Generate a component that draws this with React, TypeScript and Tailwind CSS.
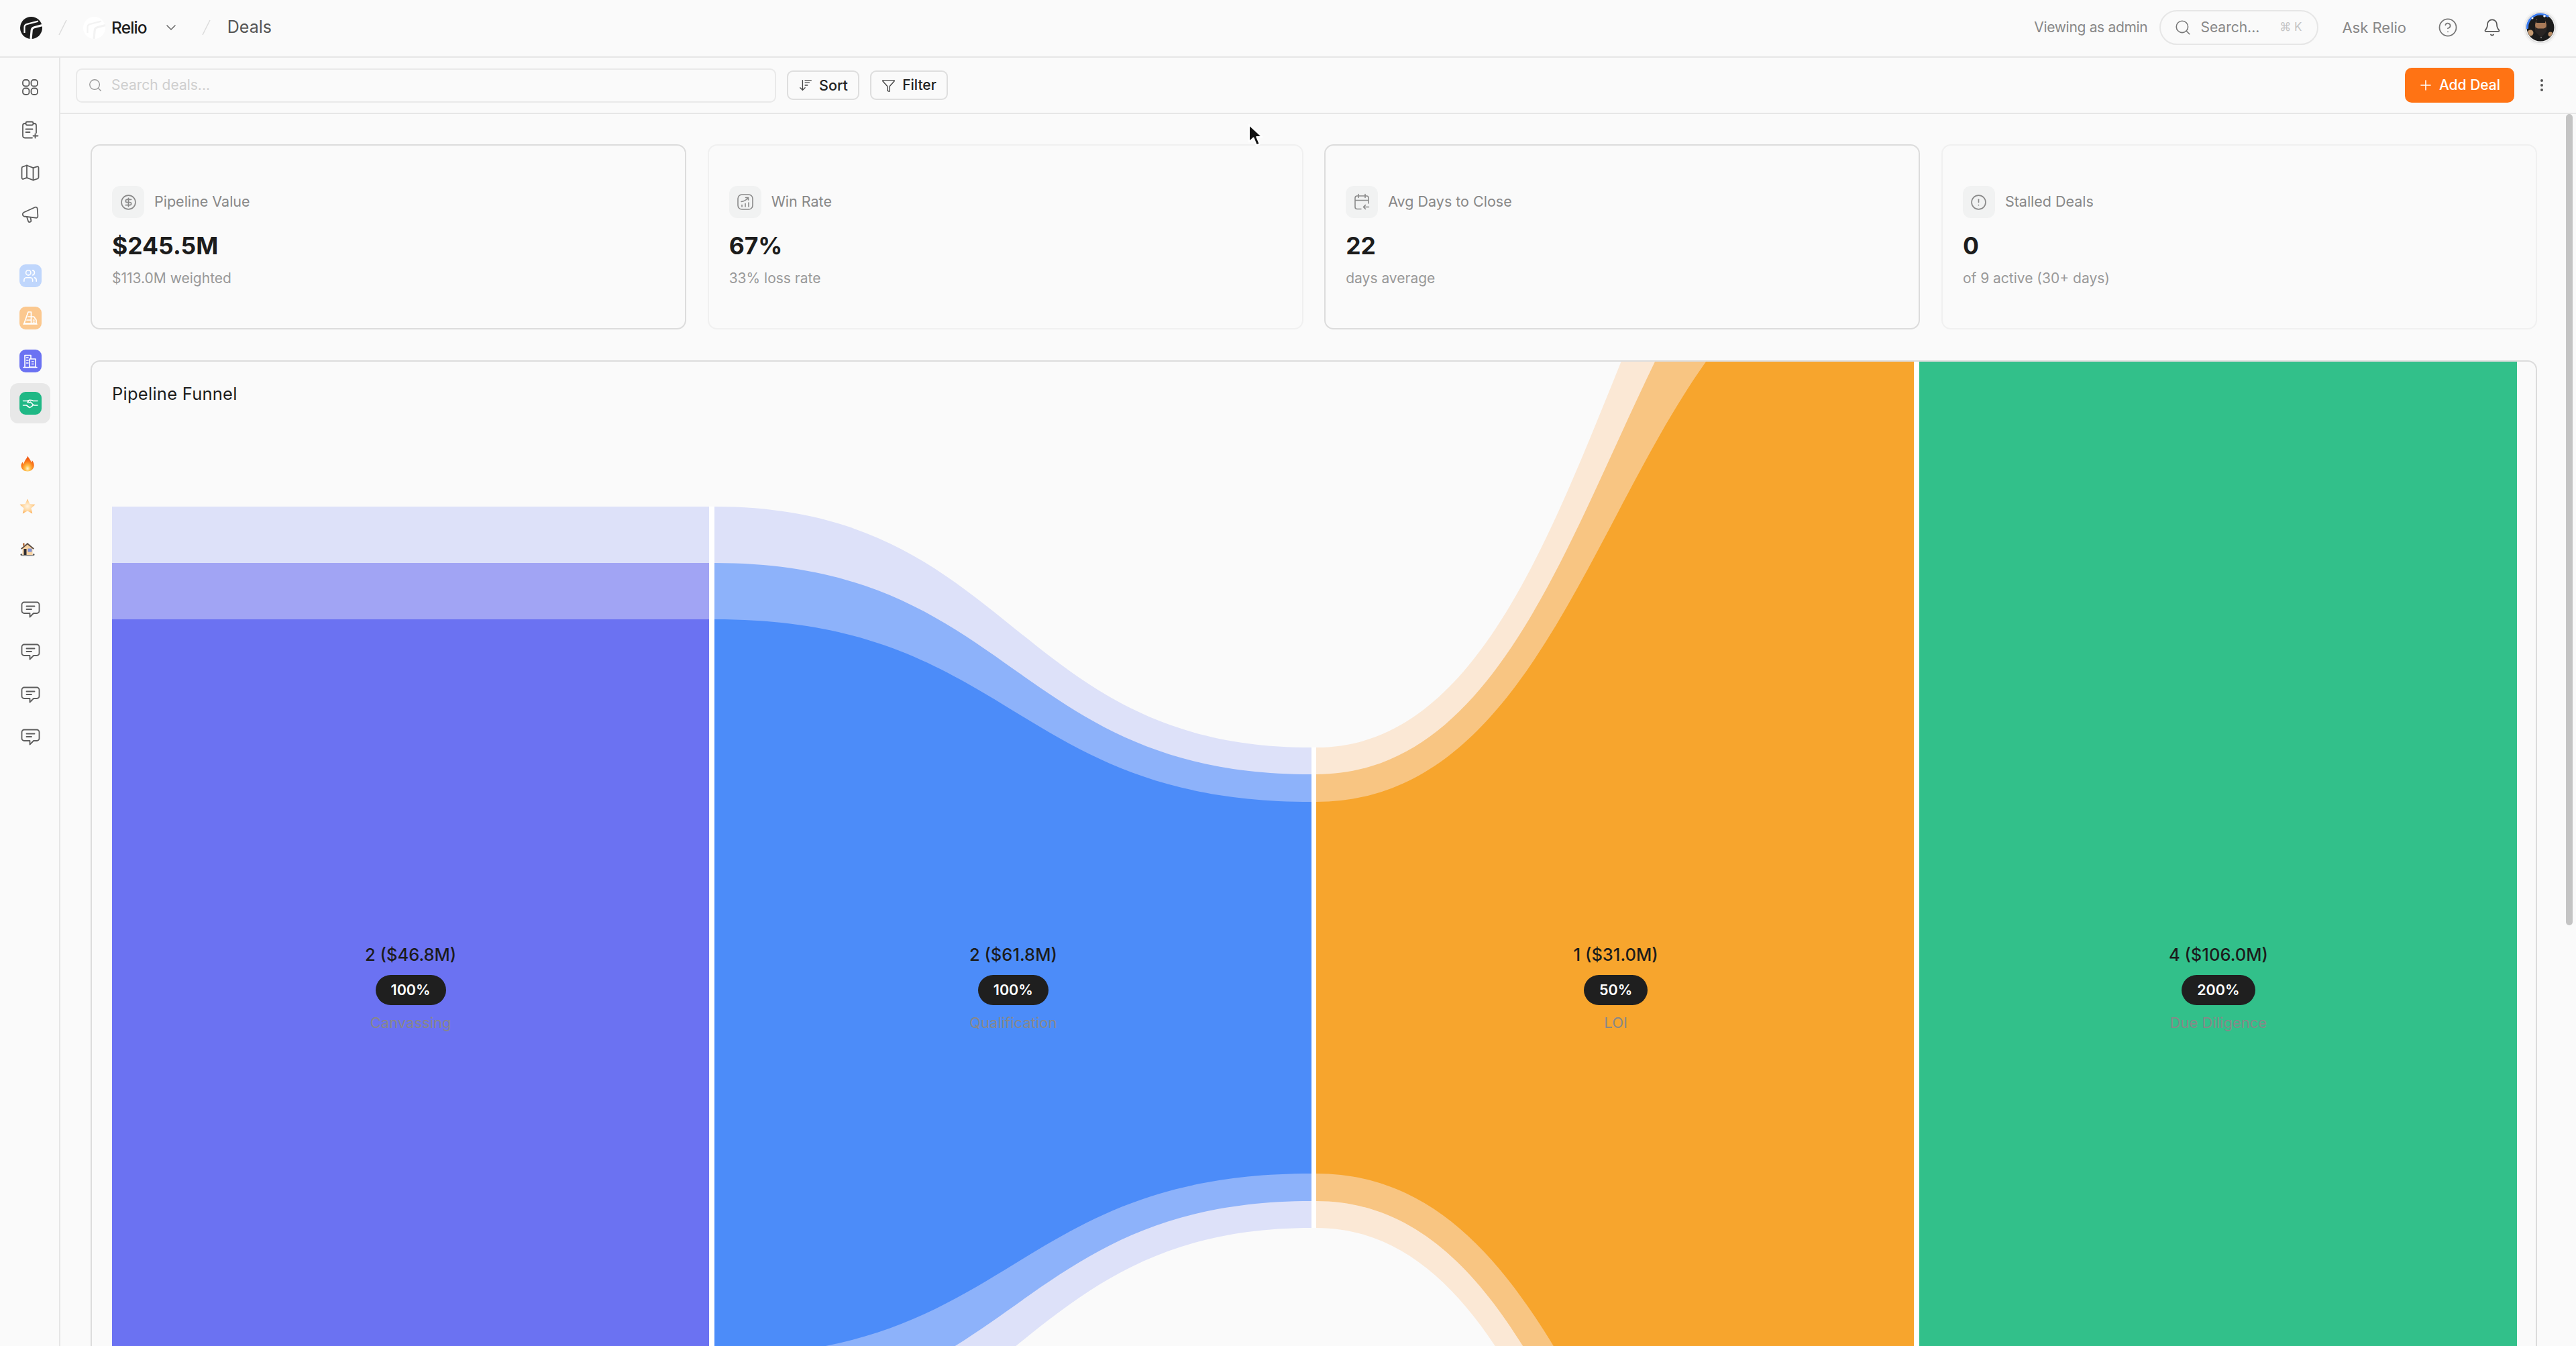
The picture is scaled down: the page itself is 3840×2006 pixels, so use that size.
import React from "react";
import { Users, CircleDollarSign, CircleAlert, Search, ChevronDown, Plus, CircleHelp, Bell, ArrowDownWideNarrow, Funnel, EllipsisVertical } from "lucide-react";

const C = 1472;
function band(x0: number, x1: number, h0: number, h1: number) {
  const m = (x0 + x1) / 2;
  return `M${x0} ${C - h0}C${m} ${C - h0} ${m} ${C - h1} ${x1} ${C - h1}L${x1} ${C + h1}C${m} ${C + h1} ${m} ${C + h0} ${x0} ${C + h0}Z`;
}

function FunnelChart() {
  const S2 = [717, 633, 549];
  const S3 = [358, 318, 277];
  const S4 = [1463, 1293, 1123];
  return (
    <svg className="absolute left-[30px] top-0" width="3585" height="1800" viewBox="167 539 3585 1800">
      <rect x="167" y="755" width="890" height="1434" fill="#dde1f9" />
      <rect x="167" y="839" width="890" height="1266" fill="#a1a4f4" />
      <rect x="167" y="923" width="890" height="1098" fill="#6b72f2" />
      <path d={band(1065, 1955, S2[0], S3[0])} fill="#dde1f9" />
      <path d={band(1065, 1955, S2[1], S3[1])} fill="#8db2fa" />
      <path d={band(1065, 1955, S2[2], S3[2])} fill="#4c8cf9" />
      <path d={band(1962, 2853, S3[0], S4[0])} fill="#fbe8d5" />
      <path d={band(1962, 2853, S3[1], S4[1])} fill="#f8c582" />
      <path d={band(1962, 2853, S3[2], S4[2])} fill="#f7a52d" />
      <rect x="2861" y="539" width="891" height="1800" fill="#32c08a" />
      <rect x="1057" y="755" width="8" height="1434" fill="#ffffff" />
      <rect x="1955" y="1114" width="7" height="716" fill="#ffffff" />
      <rect x="2853" y="539" width="8" height="1800" fill="#ffffff" />
    </svg>
  );
}

const stages = [
  { n: "2 ($46.8M)", p: "100%", l: "Canvassing" },
  { n: "2 ($61.8M)", p: "100%", l: "Qualification" },
  { n: "1 ($31.0M)", p: "50%", l: "LOI" },
  { n: "4 ($106.0M)", p: "200%", l: "Due Diligence" },
];

function Logo({ fill, line }: { fill: string; line: string }) {
  return (
    <svg width="33" height="33" viewBox="0 0 33 33" className="shrink-0">
      <circle cx="16.5" cy="16.5" r="16.5" fill={fill} />
      <path d="M6.5 24V15.5C6.5 12.8 8 11.4 10.5 10.9L27 6.6" fill="none" stroke={line} strokeWidth="2.2" />
      <path d="M16 33L17.2 20C17.5 17.5 18.5 16.4 21 15.8L33 12.6" fill="none" stroke={line} strokeWidth="3.2" />
    </svg>
  );
}

function Slash() {
  return (
    <svg width="13" height="24" viewBox="0 0 13 24" className="shrink-0">
      <path d="M12 1L1 23" stroke="#dcdcdc" strokeWidth="1.5" />
    </svg>
  );
}

function GridIcon() {
  return (
    <svg width="26" height="26" viewBox="0 0 26 26" fill="none" stroke="#5c5c5c" strokeWidth="1.8">
      <rect x="2" y="2" width="9.5" height="9.5" rx="3.6" />
      <rect x="14.5" y="2" width="9.5" height="9.5" rx="3.6" />
      <rect x="2" y="14.5" width="9.5" height="9.5" rx="3.6" />
      <rect x="14.5" y="14.5" width="9.5" height="9.5" rx="3.6" />
    </svg>
  );
}

function ClipIcon() {
  return (
    <svg width="26" height="28" viewBox="0 0 26 28" fill="none" stroke="#5c5c5c" strokeWidth="1.8" strokeLinecap="round">
      <path d="M16 25.5H5a3 3 0 0 1-3-3V7a3 3 0 0 1 3-3h1M18 4h1a3 3 0 0 1 3 3v11" />
      <rect x="6.5" y="1.5" width="11" height="5" rx="2.2" />
      <path d="M6.5 12.5h10M6.5 17h6M20.5 19.5v6M17.5 22.5h7" />
    </svg>
  );
}

function MapIcon() {
  return (
    <svg width="28" height="25" viewBox="0 0 28 25" fill="none" stroke="#5c5c5c" strokeWidth="1.8" strokeLinecap="round" strokeLinejoin="round">
      <path d="M1.5 5.5c0-1 .7-1.8 1.7-2.1L9 1.5l9.5 3.7 5.6-1.9c1.3-.4 2.4.5 2.4 1.8v14.2c0 1-.7 1.8-1.6 2.1L18.5 23.5 9 19.8l-5 1.9c-1.3.5-2.5-.4-2.5-1.8Z" />
      <path d="M9 1.5v18.3M18.5 5.2v18.3" />
    </svg>
  );
}

function MegaIcon() {
  return (
    <svg width="26" height="27" viewBox="0 0 26 27" fill="none" stroke="#5c5c5c" strokeWidth="1.8" strokeLinecap="round" strokeLinejoin="round">
      <path d="M3.5 9.5 20 2c2-.8 3.5.2 3.7 2.2l.7 10.5c.1 2-1.200 3.300-3.200 3L4 15.500c-2.500-.4-3.200-4.500-.5-6Z" />
      <path d="M8 16.200l2 6.300c.8 2.500 4.800 1.700 4.300-1l-.8-4.200" />
    </svg>
  );
}

function ChatIcon() {
  return (
    <svg width="29" height="25" viewBox="0 0 29 25" fill="none" stroke="#5c5c5c" strokeWidth="1.8" strokeLinecap="round" strokeLinejoin="round">
      <path d="M5 1.5h19a3.500 3.500 0 0 1 3.500 3.500v9.500a3.500 3.500 0 0 1-3.500 3.500h-5L13.500 23.500V18H5a3.500 3.500 0 0 1-3.500-3.500V5A3.500 3.500 0 0 1 5 1.500Z" />
      <path d="M8.500 7.500h12M8.500 12h7.500" />
    </svg>
  );
}

function Tile({ bg, children }: { bg: string; children: React.ReactNode }) {
  return <div className={`flex h-[34px] w-[33px] items-center justify-center rounded-[9px] ${bg}`}>{children}</div>;
}

function BuildingSlant() {
  return (
    <svg width="24" height="24" viewBox="0 0 24 24" fill="none" stroke="#fff" strokeWidth="1.7" strokeLinejoin="round" strokeLinecap="round">
      <path d="M3 20L9 3h4.500v17ZM13.500 10l4 0 3.500 5v5h-7.500M2 21h20M7 15h6M9 10h4M16.500 15h1.500M16.500 18h1.500" />
    </svg>
  );
}

function Buildings() {
  return (
    <svg width="24" height="24" viewBox="0 0 24 24" fill="none" stroke="#fff" strokeWidth="1.6" strokeLinejoin="round" strokeLinecap="round">
      <path d="M4 21V3.500h9V9M13 9h7v12H11V9ZM2 21.500h20M6.500 7H9M6.500 11H9M6.500 15H9M14.500 13h2.500M14.500 16.500h2.500" />
    </svg>
  );
}

function Shake() {
  return (
    <svg width="24" height="24" viewBox="0 0 24 24" fill="none" stroke="#fff" strokeWidth="1.6" strokeLinecap="round" strokeLinejoin="round">
      <path d="M1.500 8.500h6l3.500-1.200 3 .2 2.500 1h6.500M11 7.300 8 10.500c1.500 1.200 3 1 4.500-.3l4 4M1.500 15h5l4.500 3.500 3.200-1.600 2.300-2.700 1.500.8h5" />
    </svg>
  );
}

function Fire() {
  return (
    <svg width="20" height="24" viewBox="0 0 20 24">
      <defs>
        <radialGradient id="fireG" cx="50%" cy="82%" r="65%">
          <stop offset="0%" stopColor="#fff3d6" />
          <stop offset="30%" stopColor="#ffc04a" />
          <stop offset="70%" stopColor="#fb7d1c" />
          <stop offset="100%" stopColor="#f15a13" />
        </radialGradient>
      </defs>
      <path d="M10.500 0.500C11.500 4 15 6 15.300 10c1-.6 1.400-1.800 1.400-3 2 2.200 3 5 3 7.500 0 5-4 9-9.500 9S.5 20 .5 15c0-2.600 1.600-4.600 2.600-5.400 0 1.400.6 2.400 1.600 3C4.600 8 8.700 5 10.500.5Z" fill="url(#fireG)" />
    </svg>
  );
}

function Star() {
  return (
    <svg width="24" height="23" viewBox="0 0 24 23">
      <defs>
        <radialGradient id="starG" cx="50%" cy="50%" r="60%">
          <stop offset="0%" stopColor="#fff4e2" />
          <stop offset="55%" stopColor="#ffd49a" />
          <stop offset="100%" stopColor="#fb9f3a" />
        </radialGradient>
      </defs>
      <path d="M12 .5l3.400 7.500 8.100.9-6 5.500 1.700 8L12 18.400l-7.200 4 1.700-8-6-5.500 8.100-.9Z" fill="url(#starG)" />
    </svg>
  );
}

function House() {
  return (
    <svg width="22" height="22" viewBox="0 0 22 22">
      <ellipse cx="11" cy="20.600" rx="10.500" ry="1.200" fill="#8f8f8f" />
      <path d="M3.500 9.500 11 3.500l7.500 6V20h-15Z" fill="#f8d3a3" />
      <path d="M1 10.500 11 2l10 8.500-1.300 1.200L11 4.500 2.300 11.700Z" fill="#5a4a3f" />
      <rect x="4" y="2.500" width="2.500" height="4" fill="#b26b3a" />
      <rect x="5.500" y="11" width="4" height="9" fill="#2d2d33" />
      <rect x="11.500" y="10.500" width="6" height="5" fill="#7d8fd1" />
      <circle cx="1.800" cy="19.500" r="1.300" fill="#555" />
      <circle cx="20.200" cy="19.500" r="1.300" fill="#555" />
    </svg>
  );
}

function Avatar() {
  return (
    <div className="flex h-[52px] w-[52px] items-center justify-center rounded-full bg-[#f3f3f3]">
      <svg width="46" height="46" viewBox="0 0 46 46">
        <defs>
          <clipPath id="avClip"><circle cx="23" cy="23" r="20" /></clipPath>
        </defs>
        <circle cx="23" cy="23" r="22.500" fill="none" stroke="#dddddd" strokeWidth="1.500" />
        <circle cx="23" cy="23" r="20.500" fill="#1b1b1b" />
        <path d="M3.500 25A19.800 19.800 0 0 1 35 7" fill="none" stroke="#3b7cf0" strokeWidth="3" />
        <g clipPath="url(#avClip)">
          <path d="M17 10h13l2 9-1 9-7 6-8-6-1-9Z" fill="#a87a58" />
          <path d="M16 13c3-6 12-6 15-1l-1 4H17Z" fill="#1a1a1a" />
          <path d="M15.500 22c2 3 4 2.500 8 2.500s6 .5 8-2.500l.5 7-8 9-9-9Z" fill="#2a2523" />
          <circle cx="8" cy="31" r="4.500" fill="#c49a72" />
          <circle cx="38" cy="33" r="3.500" fill="#b98d66" />
          <circle cx="29" cy="6" r="1.800" fill="#f5f5f5" />
          <circle cx="11" cy="9" r="1.500" fill="#f5f5f5" />
          <circle cx="24" cy="38" r="1" fill="#8a8a8a" />
        </g>
      </svg>
    </div>
  );
}

function WinIcon() {
  return (
    <svg width="26" height="26" viewBox="0 0 26 26" fill="none" stroke="#8a8a8a" strokeWidth="1.6" strokeLinecap="round" strokeLinejoin="round">
      <rect x="2" y="2" width="22" height="22" rx="6" />
      <path d="M7 12.500c3.500-.3 7-2 10-5.500M13.500 6.500H17.500V10M8 20v-2.500M13 20v-4.500M18 20v-6" />
    </svg>
  );
}

function CalIcon() {
  return (
    <svg width="24" height="26" viewBox="0 0 24 26" fill="none" stroke="#8a8a8a" strokeWidth="1.6" strokeLinecap="round" strokeLinejoin="round">
      <path d="M11 23.500H5a3 3 0 0 1-3-3V7a3 3 0 0 1 3-3h14a3 3 0 0 1 3 3v8M7 1.500v5M17 1.500v5M2 10.500h20M22.500 20.500h-8M17.500 17.500l-3 3 3 3" />
    </svg>
  );
}

const cards = [
  { icon: <CircleDollarSign size={25} strokeWidth={1.6} color="#8a8a8a" />, t: "Pipeline Value", v: "$245.5M", s: "$113.0M weighted", b: "border-[#dcdcdc]" },
  { icon: <WinIcon />, t: "Win Rate", v: "67%", s: "33% loss rate", b: "border-[#f0f0f0]" },
  { icon: <CalIcon />, t: "Avg Days to Close", v: "22", s: "days average", b: "border-[#dcdcdc]" },
  { icon: <CircleAlert size={25} strokeWidth={1.6} color="#8a8a8a" />, t: "Stalled Deals", v: "0", s: "of 9 active (30+ days)", b: "border-[#f0f0f0]" },
];

function SideItem({ children, active }: { children: React.ReactNode; active?: boolean }) {
  return (
    <div className="flex h-[63.5px] items-center justify-center">
      {active ? (
        <div className="flex h-[60px] w-[60px] items-center justify-center rounded-[12px] bg-[#e8e8e8]">{children}</div>
      ) : (
        children
      )}
    </div>
  );
}

export default function App() {
  return (
    <div className="flex h-screen w-screen flex-col overflow-hidden bg-[#fafafa] font-['Inter',sans-serif] text-[#1c1c1c]">
      <header className="flex h-[86px] shrink-0 items-center border-b-2 border-[#e6e6e6] pb-[2px] pl-[30px] pr-[27px]">
        <Logo fill="#1c1c1c" line="#fafafa" />
        <div className="ml-[24px]"><Slash /></div>
        <div className="ml-[24px]"><Logo fill="#ffffff" line="#f3f3f3" /></div>
        <span className="ml-[9px] text-[24.5px] font-medium tracking-[-0.035em]">Relio</span>
        <ChevronDown className="ml-[24px]" size={24} strokeWidth={1.5} color="#666" />
        <div className="ml-[34px]"><Slash /></div>
        <span className="ml-[25px] text-[25px] text-[#555]">Deals</span>
        <span className="ml-auto text-[21px] text-[#888] tracking-[-0.015em]">Viewing as admin</span>
        <div className="ml-[18px] flex h-[52px] w-[237px] items-center rounded-full border-2 border-[#e6e6e6] pl-[20px]">
          <Search size={26} strokeWidth={1.5} color="#777" />
          <span className="ml-[13px] text-[21px] text-[#888]">Search...</span>
          <span className="ml-[30px] text-[17px] text-[#c4c4c4]">⌘ K</span>
        </div>
        <span className="ml-[35px] text-[22px] text-[#888]">Ask Relio</span>
        <CircleHelp className="ml-[47px]" size={30} strokeWidth={1.4} color="#777" />
        <Bell className="ml-[37px]" size={28} strokeWidth={1.5} color="#555" />
        <div className="ml-[32px]"><Avatar /></div>
      </header>
      <div className="flex min-h-0 flex-1">
        <aside className="flex w-[90px] shrink-0 flex-col gap-[26.5px] border-r-2 border-[#e6e6e6] pl-[2px] pt-[12.5px]">
          <div className="flex flex-col">
            <SideItem><GridIcon /></SideItem>
            <SideItem><ClipIcon /></SideItem>
            <SideItem><MapIcon /></SideItem>
            <SideItem><MegaIcon /></SideItem>
          </div>
          <div className="flex flex-col">
            <SideItem><Tile bg="bg-[#bfd6fc]"><Users size={22} strokeWidth={1.8} color="#fff" /></Tile></SideItem>
            <SideItem><Tile bg="bg-[#fbc88f]"><BuildingSlant /></Tile></SideItem>
            <SideItem><Tile bg="bg-[#6b72f2]"><Buildings /></Tile></SideItem>
            <SideItem active><Tile bg="bg-[#1fb885]"><Shake /></Tile></SideItem>
          </div>
          <div className="flex flex-col pr-[8px]">
            <SideItem><Fire /></SideItem>
            <SideItem><Star /></SideItem>
            <SideItem><House /></SideItem>
          </div>
          <div className="flex flex-col">
            <SideItem><ChatIcon /></SideItem>
            <SideItem><ChatIcon /></SideItem>
            <SideItem><ChatIcon /></SideItem>
            <SideItem><ChatIcon /></SideItem>
          </div>
        </aside>
        <main className="flex min-w-0 flex-1 flex-col">
          <div className="flex h-[84px] shrink-0 items-center border-b-2 border-[#e6e6e6] pl-[23px] pr-[31px]">
            <div className="flex h-[51px] w-[1044px] items-center rounded-[9px] border-2 border-[#e9e9e9] pl-[16px]">
              <Search size={22} strokeWidth={1.5} color="#999" />
              <span className="ml-[13px] text-[21px] text-[#cfcfcf]">Search deals...</span>
            </div>
            <button className="ml-[16px] flex h-[44px] w-[108px] items-center justify-center gap-[9px] rounded-[9px] border-2 border-[#dedede] text-[21.5px] font-medium text-[#222]">
              <ArrowDownWideNarrow size={22} strokeWidth={1.5} color="#444" />
              Sort
            </button>
            <button className="ml-[16px] flex h-[44px] w-[116px] items-center justify-center gap-[10px] rounded-[9px] border-2 border-[#dedede] text-[21px] font-medium text-[#222]">
              <Funnel size={21} strokeWidth={1.6} color="#444" />
              Filter
            </button>
            <button className="ml-auto flex h-[52px] w-[163px] items-center justify-center gap-[8px] rounded-[10px] bg-[#ff7314] pr-[2px] text-[21px] font-medium text-white">
              <Plus size={24} strokeWidth={1.6} color="#fff" />
              Add Deal
            </button>
            <button className="ml-[21px] flex w-[40px] items-center justify-center">
              <EllipsisVertical size={24} strokeWidth={2} color="#555" />
            </button>
          </div>
          <div className="relative min-h-0 flex-1 overflow-hidden pl-[45px] pr-[58px] pt-[45px]">
            <div className="grid grid-cols-4 gap-[31.5px]">
              {cards.map((c) => (
                <div key={c.t} className={`flex h-[276px] flex-col justify-center rounded-[14px] border-2 px-[30px] ${c.b}`}>
                  <div className="flex items-center gap-[15px]">
                    <div className="flex h-[48px] w-[48px] items-center justify-center rounded-[12px] bg-[#f1f2f2]">{c.icon}</div>
                    <span className="text-[21.5px] leading-[26px] -translate-y-[1px] text-[#888]">{c.t}</span>
                  </div>
                  <div className="mt-[21px] text-[35.5px] font-bold leading-[42px]">{c.v}</div>
                  <div className="mt-[13px] text-[21px] leading-[28px] text-[#999]">{c.s}</div>
                </div>
              ))}
            </div>
            <section className="relative mt-[45.5px] h-[1800px] overflow-hidden rounded-[14px] border-2 border-[#dcdcdc]">
              <FunnelChart />
              <h2 className="relative pl-[30px] pt-[32px] text-[25.5px] font-normal leading-[32px] tracking-[0.01em]">Pipeline Funnel</h2>
              <div className="absolute left-[30px] top-0 grid w-[3585px] grid-cols-4 gap-[8px]">
                {stages.map((s) => (
                  <div key={s.l} className="flex flex-col items-center pt-[869px]">
                    <span className="text-[25.5px] font-medium leading-[30px]">{s.n}</span>
                    <span className="mt-[15px] flex h-[45px] items-center rounded-full bg-[#1f1f1f] px-[23px] text-[21.5px] font-semibold text-white">{s.p}</span>
                    <span className="mt-[12px] text-[22px] leading-[28px] text-[#888]">{s.l}</span>
                  </div>
                ))}
              </div>
            </section>
            <div className="absolute right-[5px] top-0 h-[1209px] w-[10px] rounded-full bg-[#c4c4c4]" />
          </div>
        </main>
      </div>
      <svg className="absolute left-[1859px] top-[184px]" width="24" height="36" viewBox="0 0 24 36">
        <path d="M3 2V27.5l6.5-6 4.5 11 4.800-2-4.500-10.500H22.500Z" fill="#111" stroke="#fff" strokeWidth="2" strokeLinejoin="round" />
      </svg>
    </div>
  );
}
